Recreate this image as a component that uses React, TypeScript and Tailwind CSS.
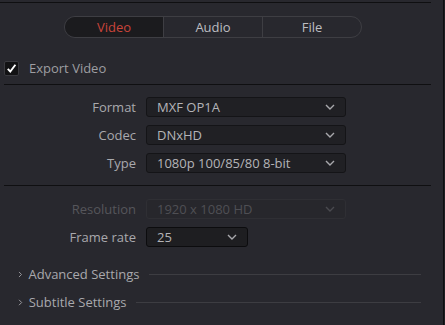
import { ReactNode } from "react"

const Chevron = ({ className = "" }: { className?: string }) => (
  <svg width="10" height="6" viewBox="0 0 10 6" className={className}>
    <path d="M1 1l4 4 4-4" fill="none" stroke="currentColor" strokeWidth="1.4" />
  </svg>
)

const ChevronRight = () => (
  <svg width="7" height="11" viewBox="0 0 7 11" className="text-[#a0a0a4]">
    <path d="M1.5 1.5l4 4-4 4" fill="none" stroke="currentColor" strokeWidth="1.4" />
  </svg>
)

function Row({ label, children, disabled }: { label: string; children: ReactNode; disabled?: boolean }) {
  return (
    <div className="flex items-center h-[20px]">
      <div className={`w-[137px] text-right pr-[1px] ${disabled ? "text-[#56565b]" : "text-[#a9a9ad]"}`}>{label}</div>
      <div className="ml-[9px]">{children}</div>
    </div>
  )
}

function Select({ value, width, disabled, strong }: { value: string; width: string; disabled?: boolean; strong?: boolean }) {
  return (
    <div
      className={`${width} h-[20px] rounded-[3px] border flex items-center justify-between pl-[10px] pr-[10px] ${
        disabled
          ? "border-[#2f2f34] bg-[#27272c] text-[#4f4f54]"
          : strong
          ? "border-[#0c0c0e] bg-[#1e1e21] text-[#b4b4b8]"
          : "border-[#141417] bg-[#202024] text-[#b4b4b8]"
      }`}
    >
      <span>{value}</span>
      <Chevron className={disabled ? "text-[#4a4a4f]" : "text-[#a8a8ac]"} />
    </div>
  )
}

function Section({ title }: { title: string }) {
  return (
    <div className="flex items-center h-[20px] pl-[18px]">
      <ChevronRight />
      <span className="ml-[6px] text-[#a9a9ad] whitespace-nowrap">{title}</span>
      <div className="ml-[10px] h-px bg-[#3d3d42] w-full mr-[22px]" />
    </div>
  )
}

export default function App() {
  return (
    <div className="w-[445px] h-[325px] bg-[#28282e] flex font-['Open_Sans',sans-serif] text-[13px] leading-none overflow-hidden">
      <div className="w-[443px] flex flex-col">
        <div className="mt-[2px] h-px w-[431px] bg-[#0f0f11]" />

        <div className="mt-[13px] flex justify-center pr-[17px]">
          <div className="flex h-[22px] w-[298px] rounded-full border border-[#3e3e43] overflow-hidden">
            <div className="flex-1 flex items-center justify-center bg-[#1b1b1e] text-[#c9443a] border-r border-[#3e3e43]">Video</div>
            <div className="flex-1 flex items-center justify-center text-[#bdbdc1] border-r border-[#3e3e43]">Audio</div>
            <div className="flex-1 flex items-center justify-center text-[#bdbdc1]">File</div>
          </div>
        </div>

        <div className="mt-[23px] flex items-center pl-[4px]">
          <div className="w-[15px] h-[15px] rounded-[2px] bg-[#121214] border border-[#3a3a3f] flex items-center justify-center">
            <svg width="11" height="11" viewBox="0 0 11 11">
              <path d="M1.8 5.8l2.5 2.8L9.4 1.8" fill="none" stroke="#fff" strokeWidth="1.9" />
            </svg>
          </div>
          <span className="ml-[10px] text-[#9e9ea2]">Export Video</span>
        </div>

        <div className="mt-[8px] ml-[4px] h-px w-[427px] bg-[#0f0f11]" />

        <div className="mt-[12px] flex flex-col gap-[8px]">
          <Row label="Format"><Select value="MXF OP1A" width="w-[200px]" /></Row>
          <Row label="Codec"><Select value="DNxHD" width="w-[200px]" /></Row>
          <Row label="Type"><Select value="1080p 100/85/80 8-bit" width="w-[200px]" /></Row>
        </div>

        <div className="mt-[12px] ml-[4px] h-px w-[427px] bg-[#0f0f11]" />

        <div className="mt-[13px] flex flex-col gap-[8px]">
          <Row label="Resolution" disabled><Select value="1920 x 1080 HD" width="w-[200px]" disabled /></Row>
          <Row label="Frame rate"><Select value="25" width="w-[102px]" strong /></Row>
        </div>

        <div className="mt-[17px] flex flex-col gap-[8px]">
          <Section title="Advanced Settings" />
          <Section title="Subtitle Settings" />
        </div>
      </div>
      <div className="w-px bg-[#0e0e10]" />
      <div className="w-px bg-[#1e1e22]" />
    </div>
  )
}
